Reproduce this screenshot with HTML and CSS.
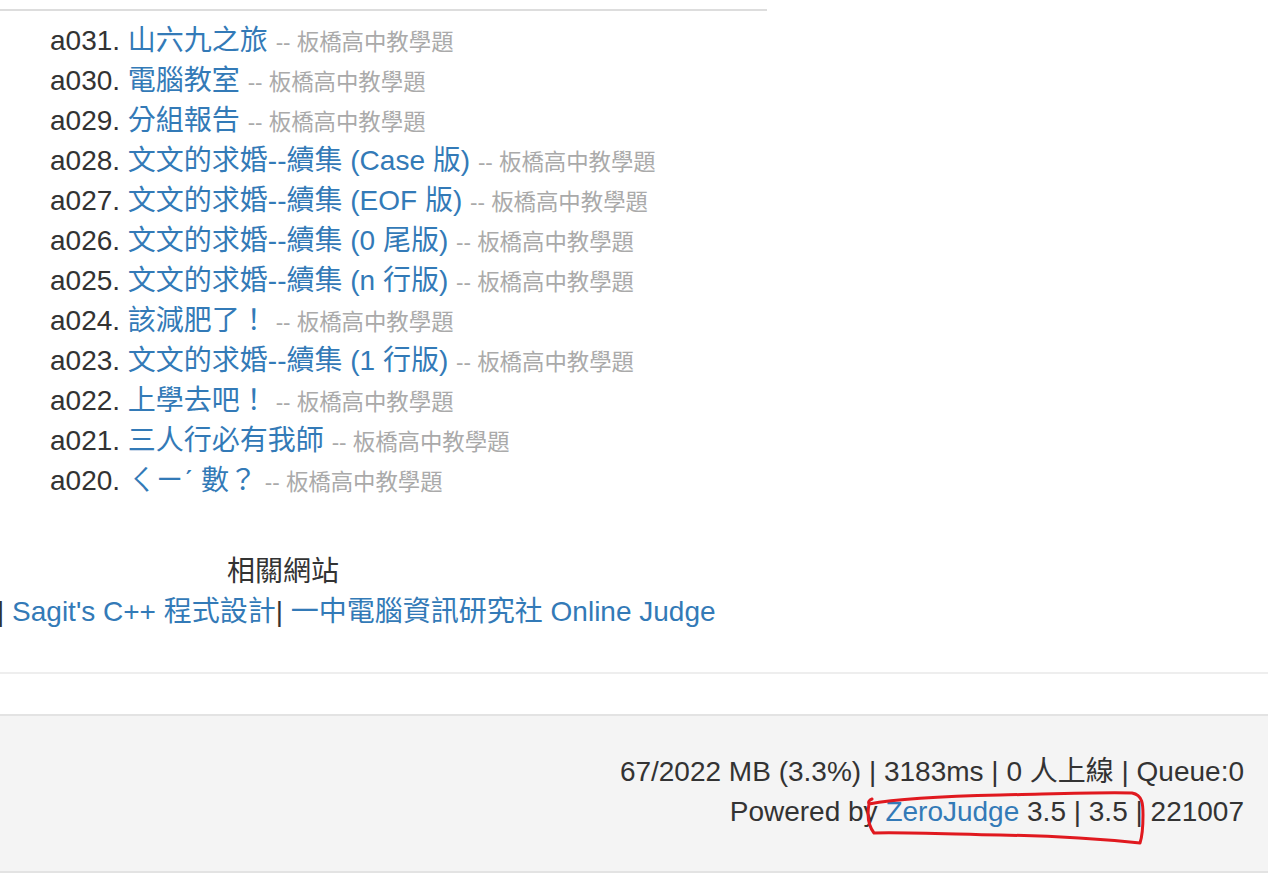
FILE: index.html
```html
<!DOCTYPE html>
<html lang="zh-Hant">
<head>
<meta charset="utf-8">
<title>ZeroJudge</title>
<link rel="stylesheet" href="styles.css">
</head>
<body>
<div class="content">
  <hr class="top-rule">
  <ul class="problems">
    <li>a031. <a href="#">山六九之旅</a> <span class="src">-- 板橋高中教學題</span></li>
    <li>a030. <a href="#">電腦教室</a> <span class="src">-- 板橋高中教學題</span></li>
    <li>a029. <a href="#">分組報告</a> <span class="src">-- 板橋高中教學題</span></li>
    <li>a028. <a href="#">文文的求婚--續集 (Case 版)</a> <span class="src">-- 板橋高中教學題</span></li>
    <li>a027. <a href="#">文文的求婚--續集 (EOF 版)</a> <span class="src">-- 板橋高中教學題</span></li>
    <li>a026. <a href="#">文文的求婚--續集 (0 尾版)</a> <span class="src">-- 板橋高中教學題</span></li>
    <li>a025. <a href="#">文文的求婚--續集 (n 行版)</a> <span class="src">-- 板橋高中教學題</span></li>
    <li>a024. <a href="#">該減肥了！</a> <span class="src">-- 板橋高中教學題</span></li>
    <li>a023. <a href="#">文文的求婚--續集 (1 行版)</a> <span class="src">-- 板橋高中教學題</span></li>
    <li>a022. <a href="#">上學去吧！</a> <span class="src">-- 板橋高中教學題</span></li>
    <li>a021. <a href="#">三人行必有我師</a> <span class="src">-- 板橋高中教學題</span></li>
    <li>a020. <a href="#">ㄑㄧˊ 數？</a> <span class="src">-- 板橋高中教學題</span></li>
  </ul>
  <div class="related">
    <div class="related-title">相關網站</div>
    <div class="related-links">| <a href="#">Sagit's C++ 程式設計</a>| <a href="#">一中電腦資訊研究社 Online Judge</a></div>
  </div>
</div>
<hr class="page-rule">
<footer class="footer">
  <div class="footer-line">67/2022 MB (3.3%) | 3183ms | 0 人上線 | Queue:0</div>
  <div class="footer-line">Powered by <a href="#">ZeroJudge</a> 3.5 | 3.5 | 221007</div>
  <svg class="mark" width="290" height="65" viewBox="0 0 290 65" aria-hidden="true">
    <path d="M12 14 C 9 15, 8 17, 9 19 C 40 13, 90 11, 140 10 C 190 9, 240 7, 272 8 C 283 10, 283 20, 283 30 C 283 42, 282 52, 280 58 C 250 55, 200 51, 140 50 C 90 49, 40 47, 14 48 C 8 40, 7 30, 9 19" fill="none" stroke="#e0191f" stroke-width="3" stroke-linecap="round" stroke-linejoin="round"/>
  </svg>
</footer>
</body>
</html>
```

FILE: styles.css
```css
html, body {
  margin: 0;
  padding: 0;
  background: #fff;
}

body {
  font-family: "Liberation Sans", Arial, "Noto Sans CJK TC", sans-serif;
  font-size: 28px;
  line-height: 40px;
  color: #333;
}

a {
  color: #337ab7;
  text-decoration: none;
}

.content {
  width: 767px;
  padding-top: 9px;
}

.top-rule {
  margin: 0;
  border: 0;
  border-top: 2px solid #dddddd;
}

.problems {
  list-style: none;
  margin: 10px 0 0;
  padding: 0 0 0 50px;
}

.problems li {
  height: 40px;
  white-space: nowrap;
}

.src {
  font-size: 80%;
  color: #aaa;
}

.related {
  margin-top: 51px;
}

.related-title,
.related-links {
  height: 40px;
  white-space: nowrap;
}

.related-title {
  width: 566px;
  text-align: center;
}

.related-links {
  margin-left: -3px;
}

.page-rule {
  margin: 40px 0 0;
  border: 0;
  border-top: 2px solid #eeeeee;
}

.footer {
  position: relative;
  margin-top: 40px;
  background: #f4f4f4;
  border-top: 2px solid #e3e3e3;
  border-bottom: 2px solid #e3e3e3;
  padding: 36px 24px 39px;
  text-align: right;
}

.footer-line {
  height: 40px;
  white-space: nowrap;
}

.mark {
  position: absolute;
  left: 860px;
  top: 69px;
}
```
